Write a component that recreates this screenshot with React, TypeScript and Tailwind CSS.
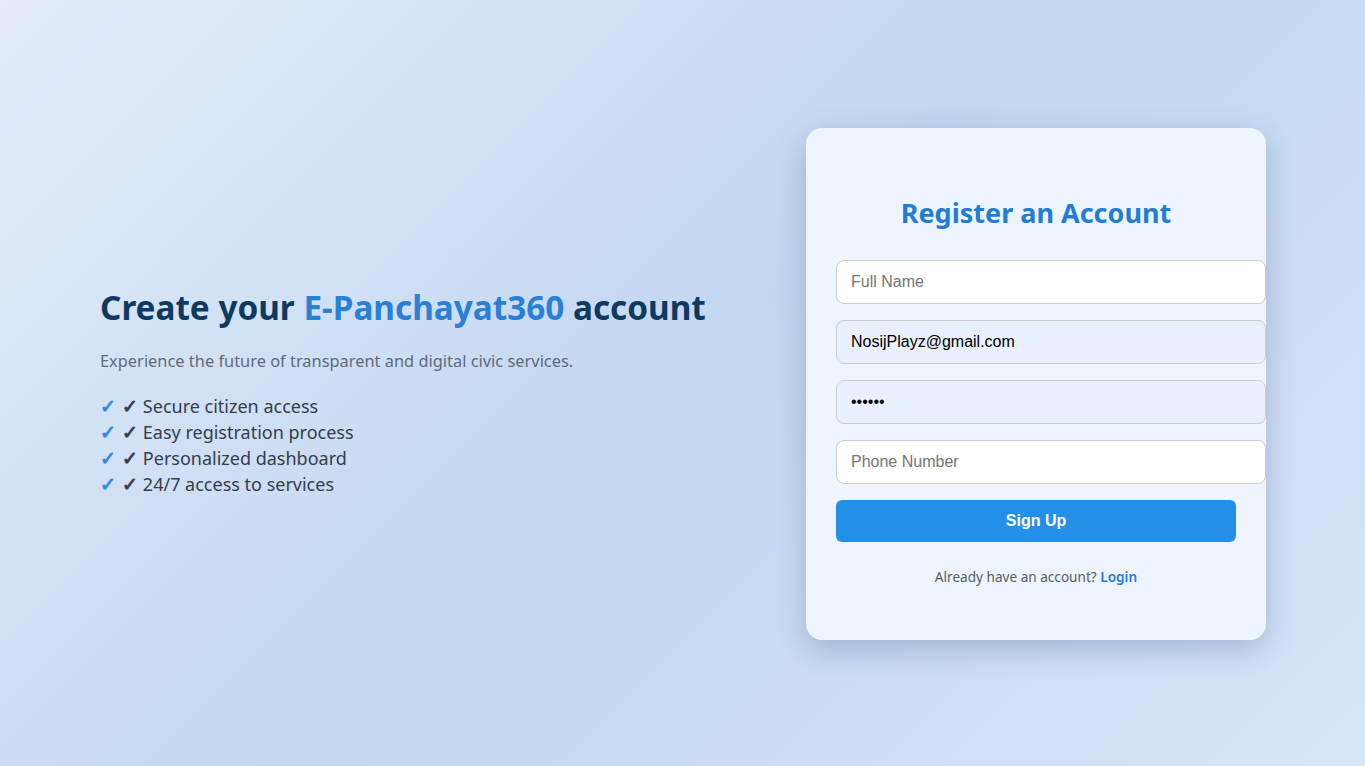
import React from "react"

const features = [
  "Secure citizen access",
  "Easy registration process",
  "Personalized dashboard",
  "24/7 access to services"
]

const App: React.FC = () => {
  return (
    <div className="flex min-h-screen items-center justify-between bg-[linear-gradient(135deg,#e3edf9_0%,#c3d6f1_50%,#d7e5f8_100%)] pl-[100px] pr-[99px] font-['Noto_Sans',sans-serif]">
      <div className="mt-[18px]">
        <h1 className="mb-[20px] text-[33.3px] font-bold leading-tight text-[#0e3a62]">
          Create your <span className="text-[#2a7fd6]">E-Panchayat360</span> account
        </h1>
        <p className="mb-[20px] text-[16.4px] leading-normal text-[#5f6b7b]">
          Experience the future of transparent and digital civic services.
        </p>
        <ul className="text-[18px] text-[#343e4c]">
          {features.map((f) => (
            <li key={f} className="flex h-[26px] items-center leading-[26px]">
              <span className="mr-[6px] font-['DejaVu_Sans',sans-serif] text-[19px] text-[#2d8ae6] [-webkit-text-stroke:0.9px_currentColor]">✓</span>
              <span className="mr-[5px] font-['DejaVu_Sans',sans-serif] text-[19px] [-webkit-text-stroke:0.9px_currentColor]">✓</span>
              <span>{f}</span>
            </li>
          ))}
        </ul>
      </div>

      <div className="mt-[2px] w-[460px] rounded-2xl bg-[#eef4fd] px-[30px] pb-[53px] pt-[68px] shadow-[0_10px_30px_rgba(30,60,110,0.25)]">
        <h2 className="mb-[30px] text-center text-[27px] font-bold leading-[34px] text-[#1f7dd6]">
          Register an Account
        </h2>
        <form className="flex flex-col gap-[16px] font-['Liberation_Sans',Arial,sans-serif]">
          <input
            type="text"
            placeholder="Full Name"
            className="h-[44px] w-[430px] rounded-lg border border-[#cccccc] bg-white px-[14px] text-[16px] text-black outline-none placeholder:text-[#757575]"
          />
          <input
            type="email"
            defaultValue="NosijPlayz@gmail.com"
            className="h-[44px] w-[430px] rounded-lg border border-[#cccccc] bg-[#e8f0fe] px-[14px] text-[16px] text-black outline-none"
          />
          <input
            type="password"
            defaultValue="123456"
            className="h-[44px] w-[430px] rounded-lg border border-[#cccccc] bg-[#e8f0fe] px-[14px] text-[16px] text-black outline-none"
          />
          <input
            type="tel"
            placeholder="Phone Number"
            className="h-[44px] w-[430px] rounded-lg border border-[#cccccc] bg-white px-[14px] text-[16px] text-black outline-none placeholder:text-[#757575]"
          />
          <button
            type="button"
            className="h-[42px] w-full rounded-md bg-[#238fe6] text-[16px] font-bold text-white">
            Sign Up
          </button>
        </form>
        <p className="mt-[25px] text-center text-[13.6px] text-[#555d66]">
          Already have an account?{" "}
          <a href="#" className="font-semibold text-[#1f7dd6]">
            Login
          </a>
        </p>
      </div>
    </div>
  )
}

export default App
